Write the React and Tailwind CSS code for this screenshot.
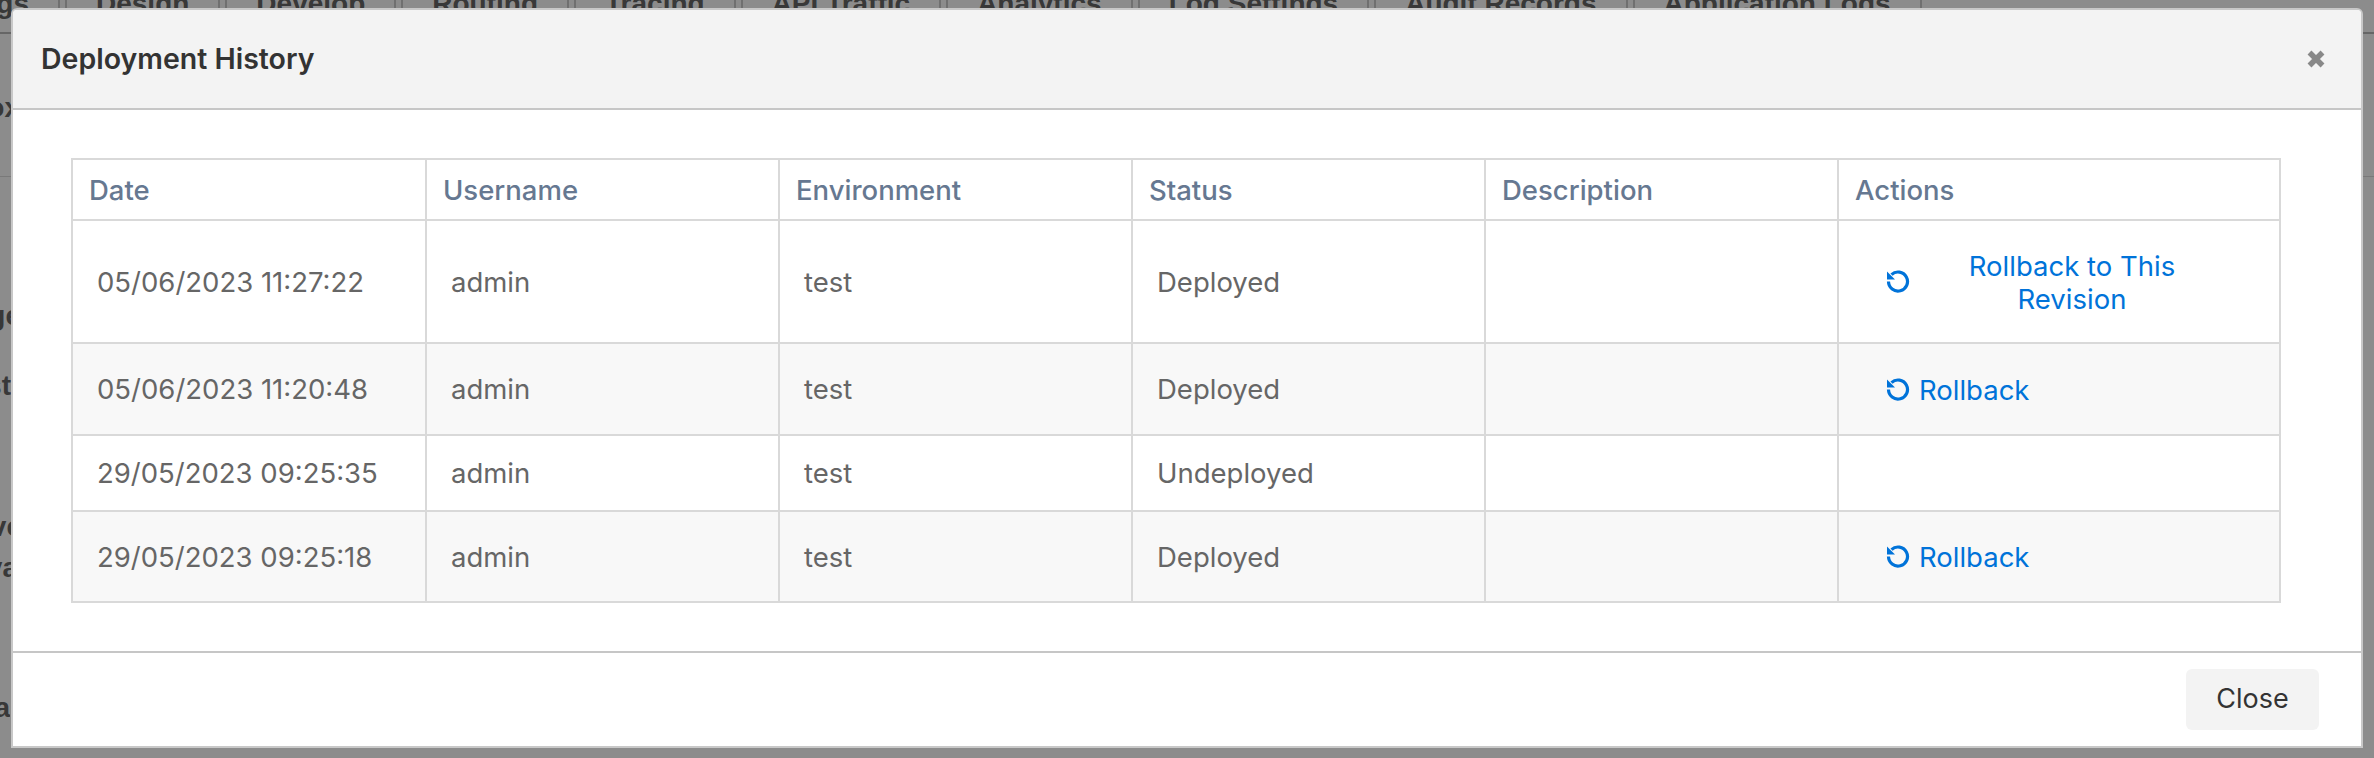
import React from 'react';

const tabs = ['Design', 'Develop', 'Routing', 'Tracing', 'API Traffic', 'Analytics', 'Log Settings', 'Audit Records', 'Application Logs'];

const rows = [
  { date: '05/06/2023 11:27:22', status: 'Deployed', height: 'h-[123px]', link: 'Rollback to This Revision' },
  { date: '05/06/2023 11:20:48', status: 'Deployed', height: 'h-[92px]', link: 'Rollback', striped: true },
  { date: '29/05/2023 09:25:35', status: 'Undeployed', height: 'h-[76px]' },
  { date: '29/05/2023 09:25:18', status: 'Deployed', height: 'h-[91px]', link: 'Rollback', striped: true },
];

const headers = ['Date', 'Username', 'Environment', 'Status', 'Description', 'Actions'];

const ResetIcon = () => (
  <svg viewBox="0 0 24 24" className="-mt-[3px] h-[24px] w-[24px] shrink-0" fill="none">
    <path d="M5.5 5.6A9.5 9.5 0 1 1 2.5 12.5" stroke="currentColor" strokeWidth="3.2" />
    <path d="M1 2.5V10.5H9Z" fill="currentColor" />
  </svg>
);

const Background = () => (
  <div className="h-[758px] overflow-hidden bg-white font-['Liberation_Sans',sans-serif] text-[28px] leading-[32px] font-bold text-[#666]">
    <div className="-mt-[12px] flex h-[46px] border-b-2 border-[#bbb]">
      <div className="mr-[5px] flex w-[60px] justify-end border-r-2 border-[#ccc] pr-[29px]">gs</div>
      {tabs.map((tab) => (
        <div key={tab} className="mr-[5px] border-x-2 border-[#ccc] px-[29px] whitespace-nowrap">
          {tab}
        </div>
      ))}
    </div>
    <div className="flex h-[143px] w-full items-center border-b border-[#ddd] pt-[6px]">
      <div className="flex w-[12px] justify-end overflow-hidden whitespace-nowrap">
        <span className="-mr-[8px]">Sandbox</span>
      </div>
    </div>
    <div className="mt-[123px] flex w-[12px] justify-end overflow-hidden whitespace-nowrap">
      <span className="-mr-[9px]">Manage</span>
    </div>
    <div className="mt-[38px] flex w-[11px] justify-end overflow-hidden whitespace-nowrap">Test</div>
    <div className="mt-[109px] flex w-[12px] justify-end overflow-hidden whitespace-nowrap">
      <span className="-mr-[10px]">Serve</span>
    </div>
    <div className="mt-[9px] flex w-[12px] justify-end overflow-hidden whitespace-nowrap">
      <span className="-mr-[6px]">Java</span>
    </div>
    <div className="mt-[108px] flex w-[10px] justify-end overflow-hidden whitespace-nowrap">Data</div>
  </div>
);

export default function App() {
  return (
    <div className="relative h-[758px] overflow-hidden">
      <Background />
      <div className="absolute inset-0 bg-black/45" />
      <div className="absolute left-[11px] top-[8px] flex h-[740px] w-[2352px] flex-col rounded-t-[6px] border-2 border-[#c8c8c8] bg-white font-['Inter',sans-serif]">
        <div className="flex h-[100px] shrink-0 items-center justify-between rounded-t-[4px] border-b-2 border-[#c6c6c6] bg-[#f3f3f3] pl-[28px] pr-[35px]">
          <h4 className="text-[28.5px] font-semibold text-[#333]">Deployment History</h4>
          <button className="text-[#888]">
            <svg viewBox="0 0 20 20" className="h-[20px] w-[20px]">
              <path d="M3.5 3.5L16.5 16.5M16.5 3.5L3.5 16.5" stroke="currentColor" strokeWidth="5.5" />
            </svg>
          </button>
        </div>
        <div className="h-[541px] shrink-0 px-[58px] pt-[48px]">
          <table className="w-[2208px] table-fixed border-collapse text-[27.5px]">
            <colgroup>
              <col className="w-[354px]" />
              <col className="w-[353px]" />
              <col className="w-[353px]" />
              <col className="w-[353px]" />
              <col className="w-[353px]" />
              <col className="w-[442px]" />
            </colgroup>
            <thead>
              <tr className="h-[61px]">
                {headers.map((h) => (
                  <th key={h} className="border-2 border-[#d9d9d9] pl-[16px] pt-[2px] text-left text-[27.5px] font-medium text-[#667891]">
                    {h}
                  </th>
                ))}
              </tr>
            </thead>
            <tbody className="text-[#666]">
              {rows.map((row) => (
                <tr key={row.date} className={`${row.height} ${row.striped ? 'bg-[#f8f8f8]' : 'bg-white'}`}>
                  <td className="border-2 border-[#d9d9d9] pl-[24px] pt-[2px]">{row.date}</td>
                  <td className="border-2 border-[#d9d9d9] pl-[24px] pt-[2px]">admin</td>
                  <td className="border-2 border-[#d9d9d9] pl-[24px] pt-[2px]">test</td>
                  <td className="border-2 border-[#d9d9d9] pl-[24px] pt-[2px]">{row.status}</td>
                  <td className="border-2 border-[#d9d9d9] pl-[24px] pt-[2px]"></td>
                  <td className="border-2 border-[#d9d9d9] pl-[47px] pt-[2px]">
                    {row.link && (
                      <a className="flex w-[339px] items-center gap-[9px] leading-[33px] text-[#0073d9]">
                        <ResetIcon />
                        <span className={row.link === 'Rollback' ? '' : 'flex-1 text-center'}>{row.link}</span>
                      </a>
                    )}
                  </td>
                </tr>
              ))}
            </tbody>
          </table>
        </div>
        <div className="flex flex-1 items-center justify-end border-t-2 border-[#c6c6c6] pr-[42px]">
          <button className="h-[61px] w-[133px] rounded-[6px] bg-[#f3f3f3] text-[27px] text-[#333]">Close</button>
        </div>
      </div>
    </div>
  );
}
